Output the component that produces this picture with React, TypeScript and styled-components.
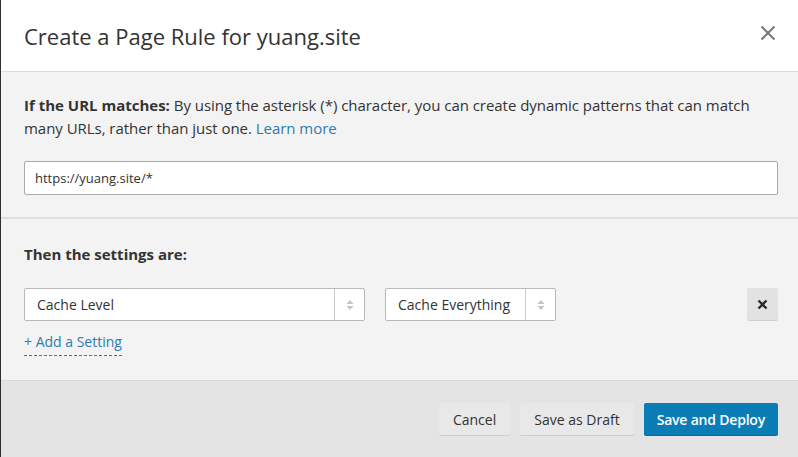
import React from "react";
import styled, { createGlobalStyle } from "styled-components";

const GlobalStyle = createGlobalStyle`
  html, body { margin: 0; padding: 0; }
  body {
    font-family: "Open Sans", "Noto Sans", Arial, sans-serif;
    background: #f3f3f3;
    color: #333;
  }
  * { box-sizing: border-box; }
`;

const Modal = styled.div`
  width: 798px;
  height: 457px;
  display: flex;
  flex-direction: column;
  border-left: 1px solid #2e2e2e;
  background: #f3f3f3;
  overflow: hidden;
`;

const Header = styled.header`
  height: 72px;
  flex: none;
  background: #fff;
  border-bottom: 1px solid #dcdcdc;
  display: flex;
  align-items: center;
  justify-content: space-between;
  padding: 0 22px 0 23px;
`;

const Title = styled.h1`
  margin: 0;
  font-size: 22px;
  font-weight: 400;
  color: #333;
  letter-spacing: 0;
`;

const CloseButton = styled.button`
  border: 0;
  background: none;
  padding: 0;
  width: 16px;
  height: 16px;
  display: flex;
  cursor: pointer;
  margin-bottom: 6px;
`;

const Section = styled.section<{ $grow?: boolean }>`
  padding: ${(p) => (p.$grow ? "24px 20px 0 23px" : "22px 20px 22px 23px")};
  flex: ${(p) => (p.$grow ? "1" : "none")};
  background: #f3f3f3;
`;

const Divider = styled.div`
  height: 2px;
  background: #dedede;
  flex: none;
`;

const Paragraph = styled.p`
  margin: 0;
  font-size: 15px;
  letter-spacing: -0.04px;
  line-height: 23px;
  color: #333;
`;

const Strong = styled.strong`
  font-weight: 700;
  letter-spacing: 0;
`;

const Link = styled.a`
  color: #2c7cb0;
  text-decoration: none;
`;

const TextInput = styled.input`
  display: block;
  width: 100%;
  height: 34px;
  margin-top: 21px;
  padding: 0 10px;
  border: 1px solid #aaa;
  border-radius: 2px;
  background: #fff;
  font-family: inherit;
  font-size: 13px;
  color: #333;
  outline: none;
`;

const Heading = styled.h2`
  margin: 0;
  font-size: 15px;
  line-height: 23px;
  font-weight: 700;
  color: #333;
`;

const SettingRow = styled.div`
  display: flex;
  align-items: flex-start;
  margin-top: 22px;
`;

const Select = styled.div<{ $width: number }>`
  width: ${(p) => p.$width}px;
  height: 33px;
  display: flex;
  background: #fff;
  border: 1px solid #b8b8b8;
  border-radius: 2px;
  margin-right: 20px;
`;

const SelectValue = styled.div`
  flex: 1;
  display: flex;
  align-items: center;
  padding-left: 12px;
  font-size: 14px;
  color: #333;
  white-space: nowrap;
`;

const SelectArrow = styled.div`
  width: 30px;
  flex: none;
  border-left: 1px solid #ccc;
  display: flex;
  align-items: center;
  justify-content: center;
`;

const Spacer = styled.div`
  flex: 1;
`;

const RemoveButton = styled.button`
  width: 31px;
  height: 32px;
  border: 0;
  border-radius: 2px;
  background: #e2e2e2;
  box-shadow: 0 1px 0 #cfcfcf;
  display: flex;
  align-items: center;
  justify-content: center;
  padding: 0;
  cursor: pointer;
`;

const AddLink = styled.a`
  display: inline-block;
  margin-top: 11px;
  font-size: 14px;
  line-height: 20px;
  color: #2c7cb0;
  border-bottom: 1px dashed #2c7cb0;
  padding-bottom: 3px;
  text-decoration: none;
`;

const Footer = styled.footer`
  height: 77px;
  flex: none;
  background: #e4e4e4;
  border-top: 1px solid #d9d9d9;
  display: flex;
  align-items: flex-start;
  justify-content: flex-end;
  gap: 10px;
  padding: 22px 20px 0 23px;
`;

const Button = styled.button<{ $primary?: boolean }>`
  height: 32px;
  padding: 0 ${(p) => (p.$primary ? "13px" : "14px")};
  border: 0;
  border-radius: 2px;
  font-family: inherit;
  font-size: 14px;
  font-weight: ${(p) => (p.$primary ? 600 : 400)};
  letter-spacing: ${(p) => (p.$primary ? "-0.2px" : "0")};
  color: ${(p) => (p.$primary ? "#fff" : "#333")};
  background: ${(p) => (p.$primary ? "#0a7db7" : "#e8e8e8")};
  box-shadow: 0 1px 0 ${(p) => (p.$primary ? "#08679a" : "#cdcdcd")};
  cursor: pointer;
`;

const ArrowIcon = () => (
  <svg width="8" height="12" viewBox="0 0 8 12">
    <path d="M4 1 L7.5 5 H0.5 Z" fill="#c4c4c4" />
    <path d="M4 11 L7.5 7 H0.5 Z" fill="#c4c4c4" />
  </svg>
);

export default function App() {
  return (
    <>
      <GlobalStyle />
      <Modal>
        <Header>
          <Title>Create a Page Rule for yuang.site</Title>
          <CloseButton aria-label="Close">
            <svg width="16" height="16" viewBox="0 0 16 16">
              <path d="M1.5 1.5 L14.5 14.5 M14.5 1.5 L1.5 14.5" stroke="#777" strokeWidth="2" />
            </svg>
          </CloseButton>
        </Header>
        <Section>
          <Paragraph>
            <Strong>If the URL matches:</Strong> By using the asterisk (*) character, you can create dynamic
            patterns that can match many URLs, rather than just one. <Link href="#">Learn more</Link>
          </Paragraph>
          <TextInput defaultValue="https://yuang.site/*" />
        </Section>
        <Divider />
        <Section $grow>
          <Heading>Then the settings are:</Heading>
          <SettingRow>
            <Select $width={341}>
              <SelectValue>Cache Level</SelectValue>
              <SelectArrow>
                <ArrowIcon />
              </SelectArrow>
            </Select>
            <Select $width={171}>
              <SelectValue>Cache Everything</SelectValue>
              <SelectArrow>
                <ArrowIcon />
              </SelectArrow>
            </Select>
            <Spacer />
            <RemoveButton aria-label="Remove">
              <svg width="11" height="11" viewBox="0 0 11 11">
                <path d="M1.5 1.5 L9.5 9.5 M9.5 1.5 L1.5 9.5" stroke="#2a2a2a" strokeWidth="2.4" />
              </svg>
            </RemoveButton>
          </SettingRow>
          <AddLink href="#">+ Add a Setting</AddLink>
        </Section>
        <Footer>
          <Button>Cancel</Button>
          <Button>Save as Draft</Button>
          <Button $primary>Save and Deploy</Button>
        </Footer>
      </Modal>
    </>
  );
}
